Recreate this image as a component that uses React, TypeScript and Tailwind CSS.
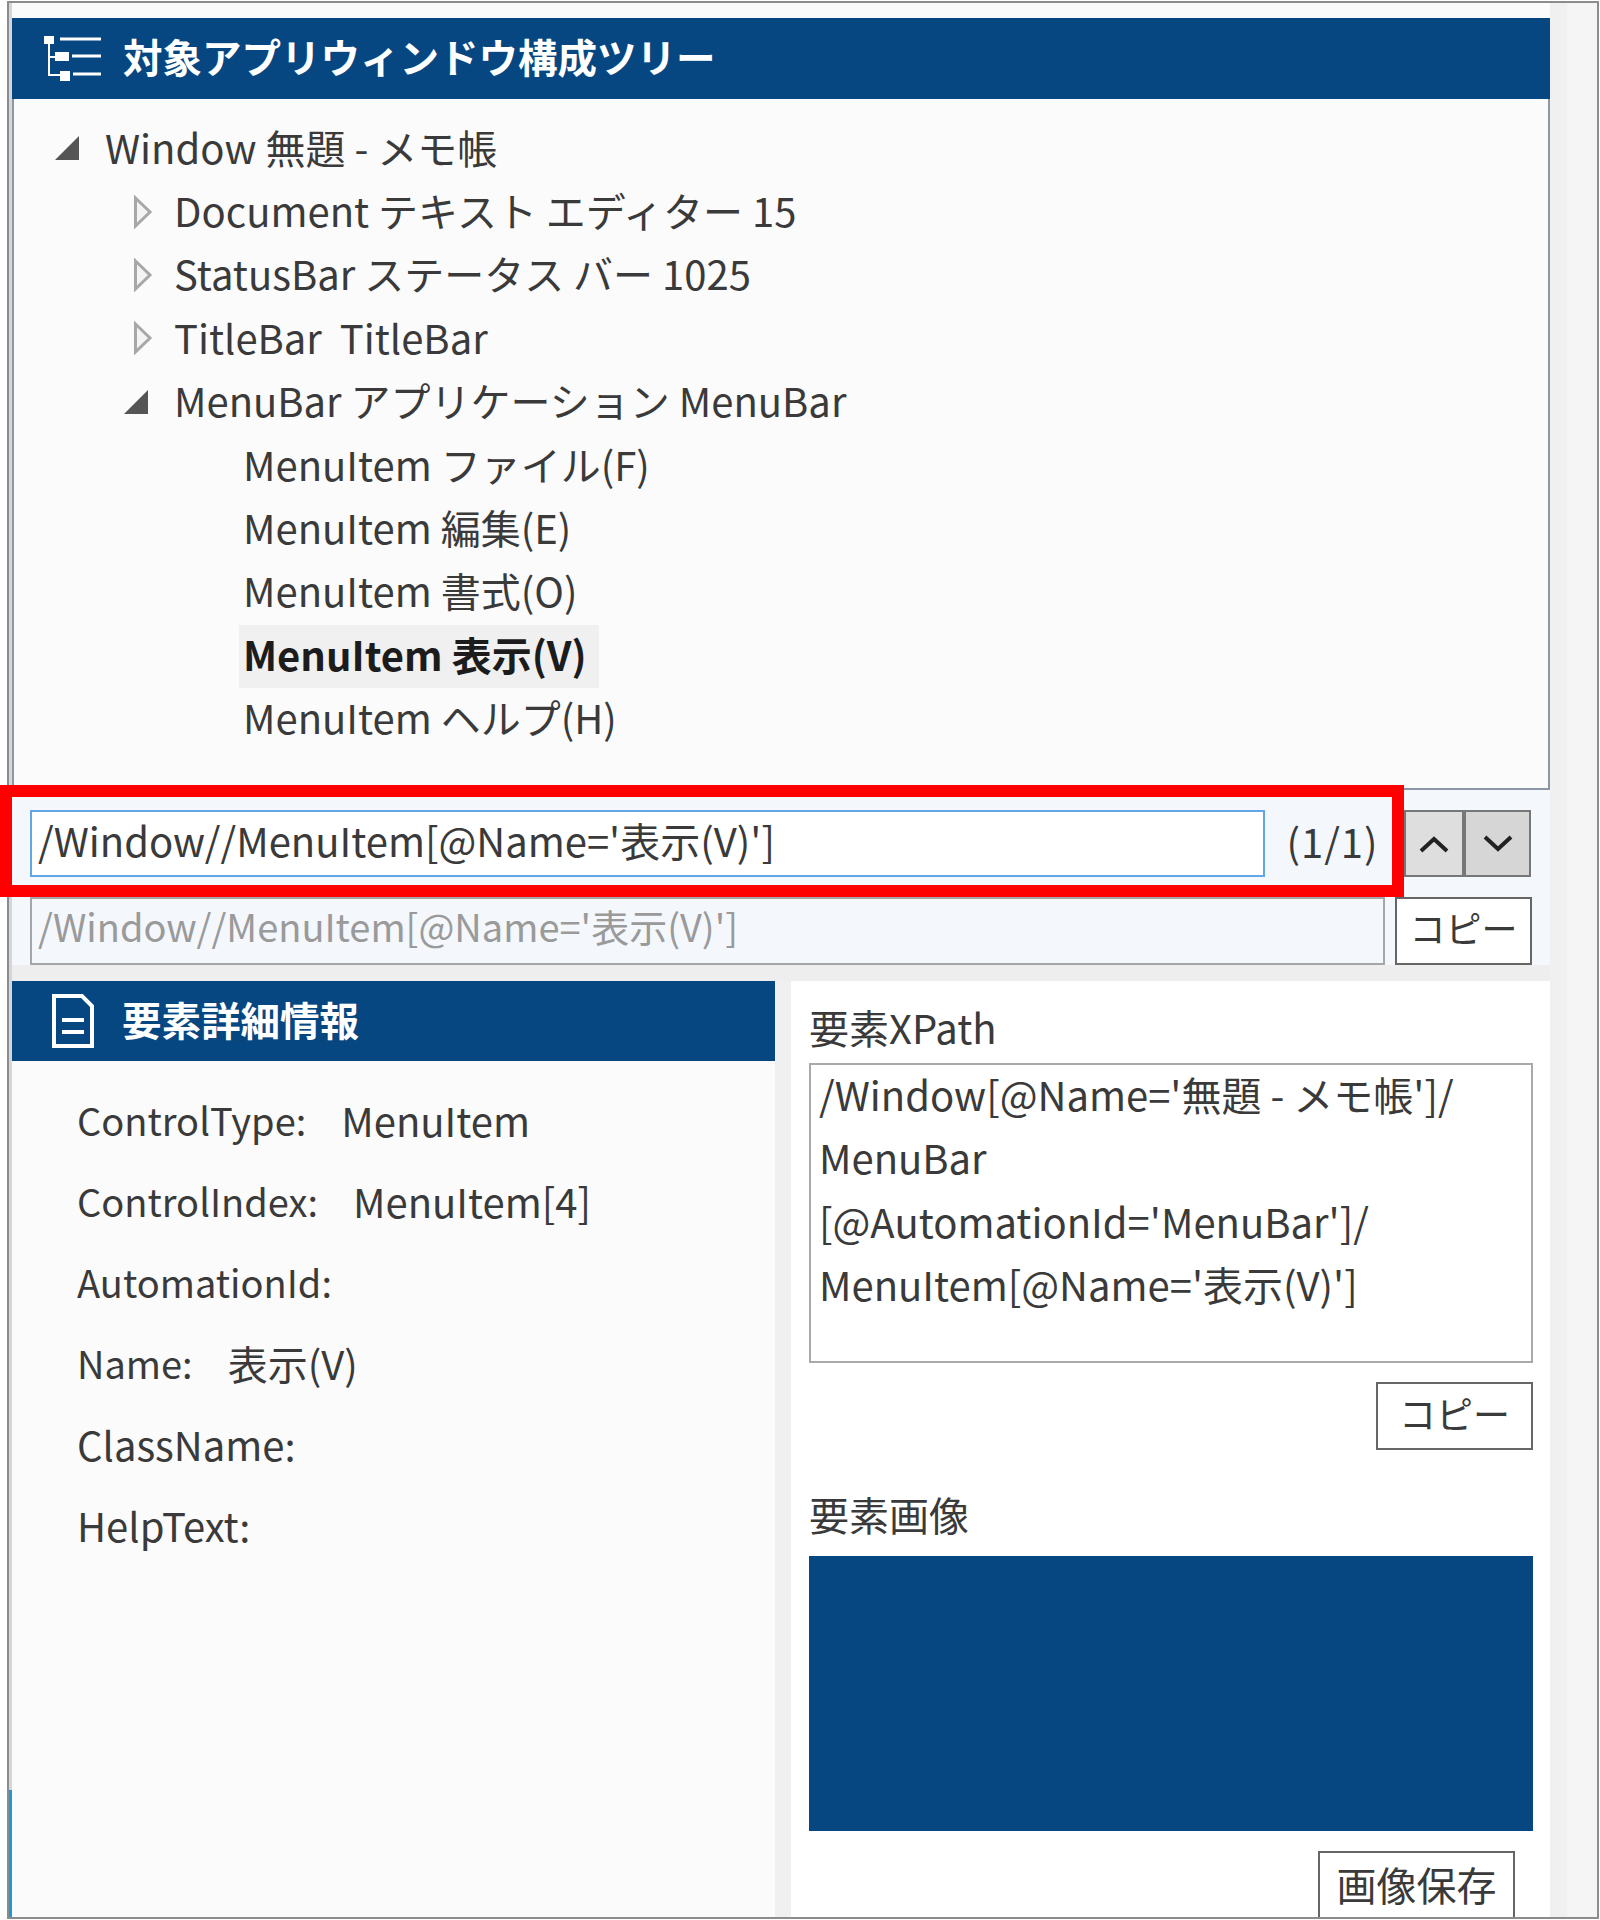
import React from "react";

const font = { fontFamily: '"Noto Sans CJK JP", "Noto Sans", sans-serif' };

function Closed() {
  return (
    <svg width="20" height="34" viewBox="0 0 20 34" className="shrink-0">
      <path d="M2.5 3 L17 17 L2.5 31 Z" fill="#f4f4f4" stroke="#a8a8a8" strokeWidth="3" />
    </svg>
  );
}
function Open() {
  return (
    <svg width="26" height="26" viewBox="0 0 26 26" className="shrink-0">
      <path d="M1 25 L25 1 V25 Z" fill="#555555" />
    </svg>
  );
}

function Row({ depth, icon, bold, children }: { depth: 0 | 1 | 2; icon?: "open" | "closed"; bold?: boolean; children: React.ReactNode }) {
  const pad = depth === 0 ? "pl-[40px]" : depth === 1 ? "pl-[109px]" : "pl-[229px]";
  return (
    <div className={`h-[63.4px] flex items-center ${pad}`}>
      {icon && (
        <div className="w-[51px] flex items-center pb-[3px]">
          {icon === "open" ? <Open /> : <div className="ml-[10px] flex"><Closed /></div>}
        </div>
      )}
      {bold ? (
        <span className="bg-[#f0f0f0] h-[63px] -ml-[4px] pl-[4px] pr-[12px] pb-[6px] flex items-center font-bold text-[#1c1c1c]">{children}</span>
      ) : (
        <span className="pb-[6px]">{children}</span>
      )}
    </div>
  );
}

function Detail({ label, value, size }: { label: string; value?: string; size: string }) {
  return (
    <div className="h-[81px] flex items-center pb-[4px]">
      <span className={size}>{label}</span>
      {value && <span className="ml-[35px]">{value}</span>}
    </div>
  );
}

export default function App() {
  return (
    <div className="relative w-[1600px] h-[1920px] bg-white overflow-hidden text-[40px] leading-none text-[#3a3a3a]" style={font}>
      <div className="ml-[7px] mt-[1px] w-[1592px] h-[1918px] border-2 border-[#8c8c8c] flex bg-[#fbfbfb] overflow-hidden">
        <div className="w-[3px] flex flex-col shrink-0">
          <div className="h-[1787px] bg-[#d4d6dc]" />
          <div className="flex-1 bg-[#1a9bd7]" />
        </div>
        <div className="w-[1538px] flex flex-col shrink-0">
          <div className="h-[15px] shrink-0" />
          <div className="h-[81px] shrink-0 bg-[#074781] flex items-center pl-[32px] text-white font-bold text-[39.5px]">
            <svg width="58" height="48" viewBox="0 0 58 48" className="shrink-0" fill="none" stroke="#ffffff">
              <rect x="0" y="1" width="10" height="8" fill="#fff" stroke="none" />
              <rect x="11" y="17" width="14" height="9" fill="#fff" stroke="none" />
              <rect x="16" y="36" width="10" height="10" fill="#fff" stroke="none" />
              <path d="M5 8 V40 H17 M5 22 H12" strokeWidth="2" />
              <path d="M16 4 H57 M28 21 H57 M29 39 H57" strokeWidth="3" />
            </svg>
            <span className="ml-[21px] pb-[5px]">対象アプリウィンドウ構成ツリー</span>
          </div>
          <div className="h-[691px] shrink-0 border-x-2 border-b-2 border-[#8d96a3] pt-[19px]">
            <Row depth={0} icon="open">Window 無題 - メモ帳</Row>
            <Row depth={1} icon="closed">Document テキスト エディター 15</Row>
            <Row depth={1} icon="closed">StatusBar ステータス バー 1025</Row>
            <Row depth={1} icon="closed">TitleBar&nbsp; TitleBar</Row>
            <Row depth={1} icon="open">MenuBar アプリケーション MenuBar</Row>
            <Row depth={2}>MenuItem ファイル(F)</Row>
            <Row depth={2}>MenuItem 編集(E)</Row>
            <Row depth={2}>MenuItem 書式(O)</Row>
            <Row depth={2} bold>MenuItem 表示(V)</Row>
            <Row depth={2}>MenuItem ヘルプ(H)</Row>
          </div>
          <div className="h-[175px] shrink-0 bg-[#f4f7fc] px-[18px] pt-[20px] flex flex-col">
            <div className="flex h-[67px]">
              <div className="w-[1235px] border-2 border-[#63a6e6] bg-white flex items-center pl-[6px] pb-[7px]">/Window//MenuItem[@Name='表示(V)']</div>
              <div className="w-[139px] flex items-center justify-center pb-[6px] pr-[4px] tracking-[1px]">(1/1)</div>
              <button className="w-[60px] h-[67px] border-2 border-[#777] bg-[#dedede] flex items-center justify-center">
                <svg width="30" height="20" viewBox="0 0 30 20" fill="none" stroke="#222" strokeWidth="4"><path d="M2 17 L15 5 L28 17" /></svg>
              </button>
              <button className="w-[67px] h-[67px] border-2 border-[#777] bg-[#d6d6d6] flex items-center justify-center">
                <svg width="30" height="20" viewBox="0 0 30 20" fill="none" stroke="#222" strokeWidth="4"><path d="M2 3 L15 15 L28 3" /></svg>
              </button>
            </div>
            <div className="flex h-[68px] mt-[20px]">
              <div className="w-[1356px] border-2 border-[#a6a6a6] bg-[#f4f7fc] text-[#9a9a9a] text-[38px] flex items-center pl-[6px] pb-[10px]">/Window//MenuItem[@Name='表示(V)']</div>
              <button className="ml-[10px] w-[137px] border-2 border-[#666] bg-white flex items-center justify-center text-[36px] pb-[8px]">コピー</button>
            </div>
          </div>
          <div className="h-[16px] shrink-0 bg-[#eeeeee]" />
          <div className="flex flex-1 min-h-0">
            <div className="w-[763px] shrink-0">
              <div className="h-[80px] bg-[#074781] text-white font-bold text-[39.5px] flex items-center pl-[40px]">
                <svg width="42" height="54" viewBox="0 0 42 54" fill="none" stroke="#fff" strokeWidth="4" className="shrink-0">
                  <path d="M2 2 H30 L40 12 V52 H2 Z" />
                  <path d="M10 26 H32 M10 38 H32" />
                </svg>
                <span className="ml-[28px] pb-[5px]">要素詳細情報</span>
              </div>
              <div className="pl-[65px] pt-[20px]">
                <Detail size="text-[38px]" label="ControlType:" value="MenuItem" />
                <Detail size="text-[38px]" label="ControlIndex:" value="MenuItem[4]" />
                <Detail size="text-[38px]" label="AutomationId:" />
                <Detail size="text-[38px]" label="Name:" value="表示(V)" />
                <Detail size="text-[40px]" label="ClassName:" />
                <Detail size="text-[40px]" label="HelpText:" />
              </div>
            </div>
            <div className="w-[16px] shrink-0 bg-[#f0f0f0]" />
            <div className="flex-1 bg-white pl-[18px] pr-[17px] flex flex-col">
              <div className="h-[82px] shrink-0 flex items-end pb-[16px]">要素XPath</div>
              <div className="h-[300px] shrink-0 border-2 border-[#a9a9a9] pl-[8px] pb-[8px] leading-[63.4px] break-words -mt-[0px]">
                <div className="-mt-[2px]">
                  /Window[@Name='無題 - メモ帳']/<br />MenuBar<br />[@AutomationId='MenuBar']/<br />MenuItem[@Name='表示(V)']
                </div>
              </div>
              <div className="flex justify-end mt-[19px]">
                <button className="w-[157px] h-[68px] border-2 border-[#666] bg-white flex items-center justify-center text-[37px] pb-[5px]">コピー</button>
              </div>
              <div className="h-[3px] -ml-[18px] -mr-[17px] mt-[18px] bg-[#eef1f6]" />
              <div className="h-[52px] mt-[22px] shrink-0 flex items-center pb-[4px]">要素画像</div>
              <div className="h-[275px] mt-[14px] shrink-0 bg-[#074781]" />
              <div className="flex justify-end pr-[18px] mt-[20px]">
                <button className="w-[197px] h-[70px] border-2 border-[#666] bg-white flex items-center justify-center pb-[5px]">画像保存</button>
              </div>
            </div>
          </div>
        </div>
        <div className="flex-1 flex">
          <div className="w-[17px] bg-[#f0f0f0]" />
          <div className="flex-1 bg-[#f5f5f5]" />
        </div>
      </div>
      <div className="absolute left-0 top-[785px] w-[1404px] h-[112px] border-[12px] border-[#ff0000]" />
    </div>
  );
}
